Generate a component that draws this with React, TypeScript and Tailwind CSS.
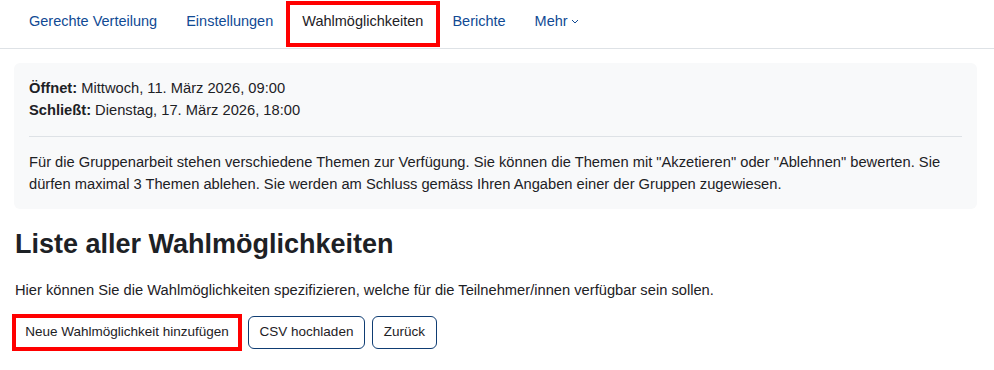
import React from "react";

export default function App() {
  const nav = ["Gerechte Verteilung", "Einstellungen", "Wahlmöglichkeiten", "Berichte"];
  return (
    <div className="min-h-[370px] bg-white text-[#1d2125]" style={{ fontFamily: '"Liberation Sans", Arial, sans-serif' }}>
      <nav className="flex h-[49px] items-stretch border-b border-[#dee2e6] pl-[14.5px] text-[14.5px]">
        {nav.map((n) => (
          <div
            key={n}
            className={
              n === "Wahlmöglichkeiten"
                ? "my-[3px] flex items-start px-[14.5px] pt-[8px] text-[#1d2125] shadow-[inset_0_0_0_2px_#ff0000,0_0_0_2px_#ff0000]"
                : "flex items-start px-[14.5px] pt-[11px] text-[#114a94]"
            }
          >
            {n}
          </div>
        ))}
        <div className="flex items-start px-[14.5px] pt-[11px] text-[#114a94]">
          Mehr
          <svg className="ml-[3px] mt-[8px]" width="8" height="5" viewBox="0 0 8 5" fill="none">
            <path d="M1 1l3 3 3-3" stroke="#114a94" strokeWidth="1" />
          </svg>
        </div>
      </nav>

      <div className="ml-[14px] mt-[14px] w-[963px] rounded-[6px] bg-[#f8f9fa] px-[15px] pt-[15px] pb-[14px] text-[14.7px] leading-[21.5px]">
        <div>
          <b>Öffnet:</b> Mittwoch, 11. März 2026, 09:00
        </div>
        <div>
          <b>Schließt:</b> Dienstag, 17. März 2026, 18:00
        </div>
        <hr className="mt-[15px] mb-[15px] border-t border-[#dee2e6]" />
        <p>
          Für die Gruppenarbeit stehen verschiedene Themen zur Verfügung. Sie können die Themen mit "Akzetieren" oder "Ablehnen" bewerten. Sie dürfen maximal 3 Themen ablehen. Sie werden am Schluss gemäss Ihren Angaben einer der Gruppen zugewiesen.
        </p>
      </div>

      <h2 className="ml-[15px] mt-[18px] text-[27px] font-bold leading-[34px] text-[#1d2125]">Liste aller Wahlmöglichkeiten</h2>

      <p className="ml-[15px] mt-[19px] text-[14.7px] leading-[21px]">
        Hier können Sie die Wahlmöglichkeiten spezifizieren, welche für die Teilnehmer/innen verfügbar sein sollen.
      </p>

      <div className="ml-[12px] mt-[13px] flex items-center text-[13.5px]">
        <div className="border-[4px] border-[#ff0000]">
          <button className="h-[29px] w-[222px] rounded-[2px] bg-white text-[#1d2125]">Neue Wahlmöglichkeit hinzufügen</button>
        </div>
        <button className="ml-[6px] h-[33px] w-[117px] rounded-[6px] border border-[#0f3d73] bg-white text-[#1d2125]">CSV hochladen</button>
        <button className="ml-[7px] h-[33px] w-[65px] rounded-[6px] border border-[#0f3d73] bg-white text-[#1d2125]">Zurück</button>
      </div>
    </div>
  );
}
